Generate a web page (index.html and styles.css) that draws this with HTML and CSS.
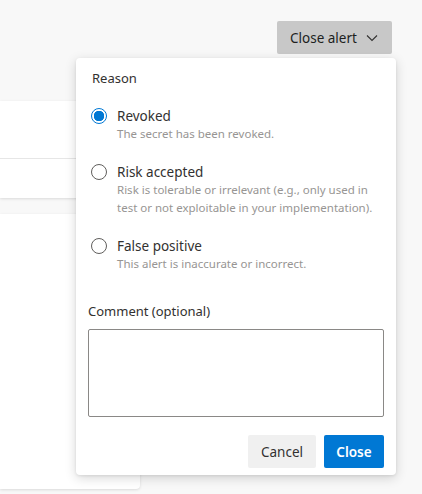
FILE: index.html
```html
<!DOCTYPE html>
<html>
<head>
<meta charset="utf-8">
<link rel="stylesheet" href="styles.css">
</head>
<body>
<div class="page">
  <div class="topbar">
    <button class="alert-btn">Close alert
      <svg class="chev" width="12" height="8" viewBox="0 0 12 8"><path d="M1 1.5 L6 6.5 L11 1.5" fill="none" stroke="#323130" stroke-width="1.1"/></svg>
    </button>
  </div>
  <div class="cards">
    <div class="card card-top">
      <div class="row"></div>
      <div class="row"></div>
    </div>
    <div class="card card-main"></div>
  </div>

  <div class="popup">
    <div class="legend">Reason</div>
    <div class="options">
      <div class="option">
        <span class="radio checked"></span>
        <div class="opt-text">
          <div class="opt-label">Revoked</div>
          <div class="opt-desc">The secret has been revoked.</div>
        </div>
      </div>
      <div class="option">
        <span class="radio"></span>
        <div class="opt-text">
          <div class="opt-label">Risk accepted</div>
          <div class="opt-desc">Risk is tolerable or irrelevant (e.g., only used in test or not exploitable in your implementation).</div>
        </div>
      </div>
      <div class="option">
        <span class="radio"></span>
        <div class="opt-text">
          <div class="opt-label">False positive</div>
          <div class="opt-desc">This alert is inaccurate or incorrect.</div>
        </div>
      </div>
    </div>
    <div class="comment-label">Comment (optional)</div>
    <div class="textarea"></div>
    <div class="actions">
      <button class="btn btn-cancel">Cancel</button>
      <button class="btn btn-primary">Close</button>
    </div>
  </div>
</div>
</body>
</html>
```

FILE: styles.css
```css
* { box-sizing: border-box; }
html, body {
  margin: 0;
  padding: 0;
  background: #f8f8f8;
  font-family: "Noto Sans", "Open Sans", sans-serif;
  color: #323130;
}
.page {
  position: relative;
  width: 422px;
  height: 494px;
  overflow: hidden;
}
.topbar {
  display: flex;
  justify-content: flex-end;
  padding: 21px 30px 0 0;
  height: 101px;
}
.alert-btn {
  display: flex;
  align-items: center;
  gap: 9px;
  height: 33px;
  width: 115px;
  padding: 0 0 0 13px;
  border: none;
  border-radius: 2px;
  background: #c8c8c8;
  font-family: inherit;
  font-size: 13.5px;
  color: #201f1e;
}
.chev { margin-top: 1px; }
.cards {
  display: flex;
  flex-direction: column;
  gap: 16px;
}
.card {
  background: #fff;
  box-shadow: 0 1px 3px rgba(0,0,0,0.12);
  border-radius: 0 4px 4px 0;
}
.card-top {
  width: 300px;
}
.card-top .row {
  height: 57px;
}
.card-top .row + .row {
  height: 40px;
  border-top: 1px solid #e6e6e6;
}
.card-main {
  width: 140px;
  height: 275px;
}
.popup {
  position: absolute;
  left: 76px;
  top: 58px;
  width: 320px;
  height: 417px;
  background: #fff;
  border-radius: 4px;
  box-shadow: 0 3px 12px rgba(0,0,0,0.16), 0 1px 3px rgba(0,0,0,0.08);
  padding: 11px 12px 0 12px;
}
.legend {
  font-size: 13px;
  padding-left: 4px;
  line-height: 18px;
}
.options {
  display: flex;
  flex-direction: column;
  gap: 20px;
  margin-top: 20px;
  padding-right: 6px;
}
.option {
  display: flex;
  gap: 10px;
  padding-left: 3px;
}
.radio {
  flex: none;
  width: 16px;
  height: 16px;
  border-radius: 50%;
  border: 1px solid #605e5c;
  margin-top: 1px;
  background: #fff;
}
.radio.checked {
  border: 1.5px solid #0078d4;
  background: radial-gradient(circle, #0078d4 0 5px, #fff 5.5px);
}
.opt-label {
  font-size: 13.5px;
  line-height: 18px;
}
.opt-desc {
  font-size: 11.5px;
  line-height: 18px;
  color: #979593;
}
.comment-label {
  margin-top: 29px;
  font-size: 13px;
  line-height: 18px;
}
.textarea {
  margin-top: 9px;
  width: 296px;
  height: 88px;
  border: 1px solid #8a8886;
  border-radius: 2px;
}
.actions {
  display: flex;
  justify-content: flex-end;
  gap: 8px;
  margin-top: 18px;
}
.btn {
  height: 33px;
  border: none;
  border-radius: 2px;
  font-family: inherit;
  font-size: 13.5px;
}
.btn-cancel {
  width: 68px;
  background: #f0f0f0;
  color: #323130;
}
.btn-primary {
  width: 60px;
  background: #0078d4;
  color: #fff;
  font-weight: 600;
}
```
